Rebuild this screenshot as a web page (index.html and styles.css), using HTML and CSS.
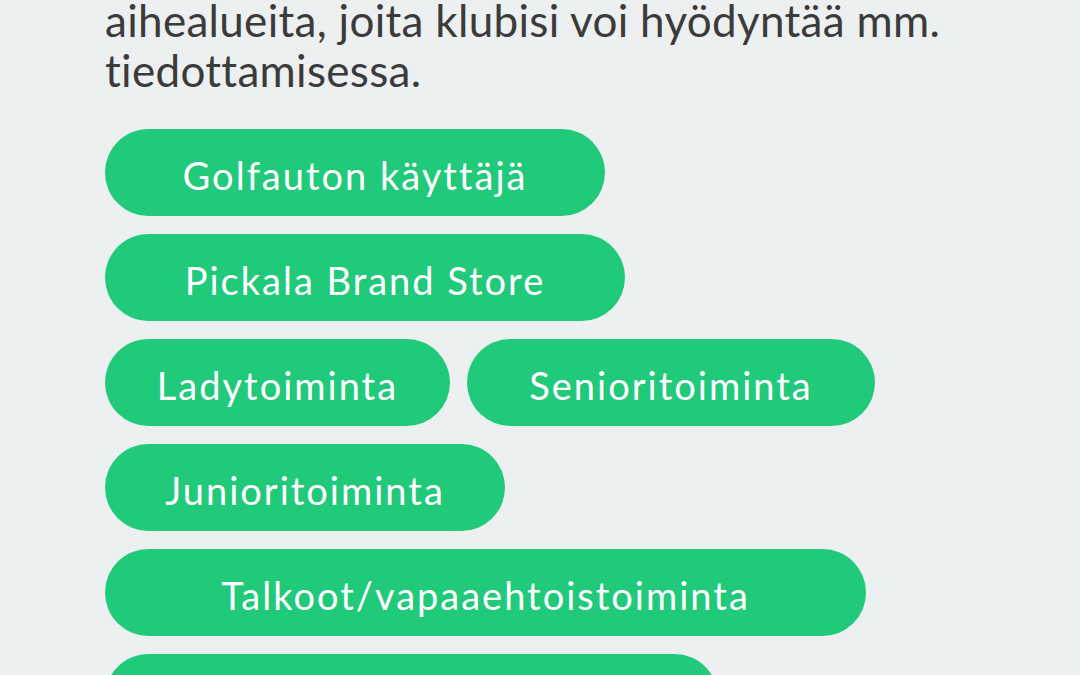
FILE: index.html
```html
<!DOCTYPE html>
<html lang="fi">
<head>
<meta charset="utf-8">
<link rel="stylesheet" href="styles.css">
</head>
<body>
<main class="content">
  <p class="intro">aihealueita, joita klubisi voi hyödyntää mm. tiedottamisessa.</p>
  <div class="chips">
    <a class="chip w-golf">Golfauton käyttäjä</a>
    <a class="chip w-brand">Pickala Brand Store</a>
    <a class="chip w-lady">Ladytoiminta</a>
    <a class="chip w-senior">Senioritoiminta</a>
    <a class="chip w-junior">Junioritoiminta</a>
    <a class="chip w-talkoot">Talkoot/vapaaehtoistoiminta</a>
    <a class="chip w-last">Kilpailutoiminta</a>
  </div>
</main>
</body>
</html>
```

FILE: styles.css
```css
html, body {
  margin: 0;
  padding: 0;
  background: #ecf0f1;
  height: 100%;
  overflow: hidden;
}

.content {
  width: 870px;
  padding: 0 105px;
  font-family: Lato, "Open Sans", sans-serif;
}

.intro {
  margin: -5px 0 0 0;
  font-size: 44px;
  line-height: 50px;
  color: #3b3b3b;
  letter-spacing: 0.3px;
}

.chips {
  margin-top: 34px;
  display: flex;
  flex-wrap: wrap;
  column-gap: 17px;
  row-gap: 18px;
}

.chip {
  box-sizing: border-box;
  height: 87px;
  padding-top: 4px;
  border-radius: 44px;
  background: #21ca7b;
  color: #ffffff;
  font-size: 38px;
  letter-spacing: 2px;
  display: flex;
  align-items: center;
  justify-content: center;
  white-space: nowrap;
}

.w-golf { width: 500px; }
.w-brand { width: 520px; }
.w-lady { width: 345px; }
.w-senior { width: 408px; }
.w-junior { width: 400px; }
.w-talkoot { width: 761px; }
.w-last { width: 613px; }
```
